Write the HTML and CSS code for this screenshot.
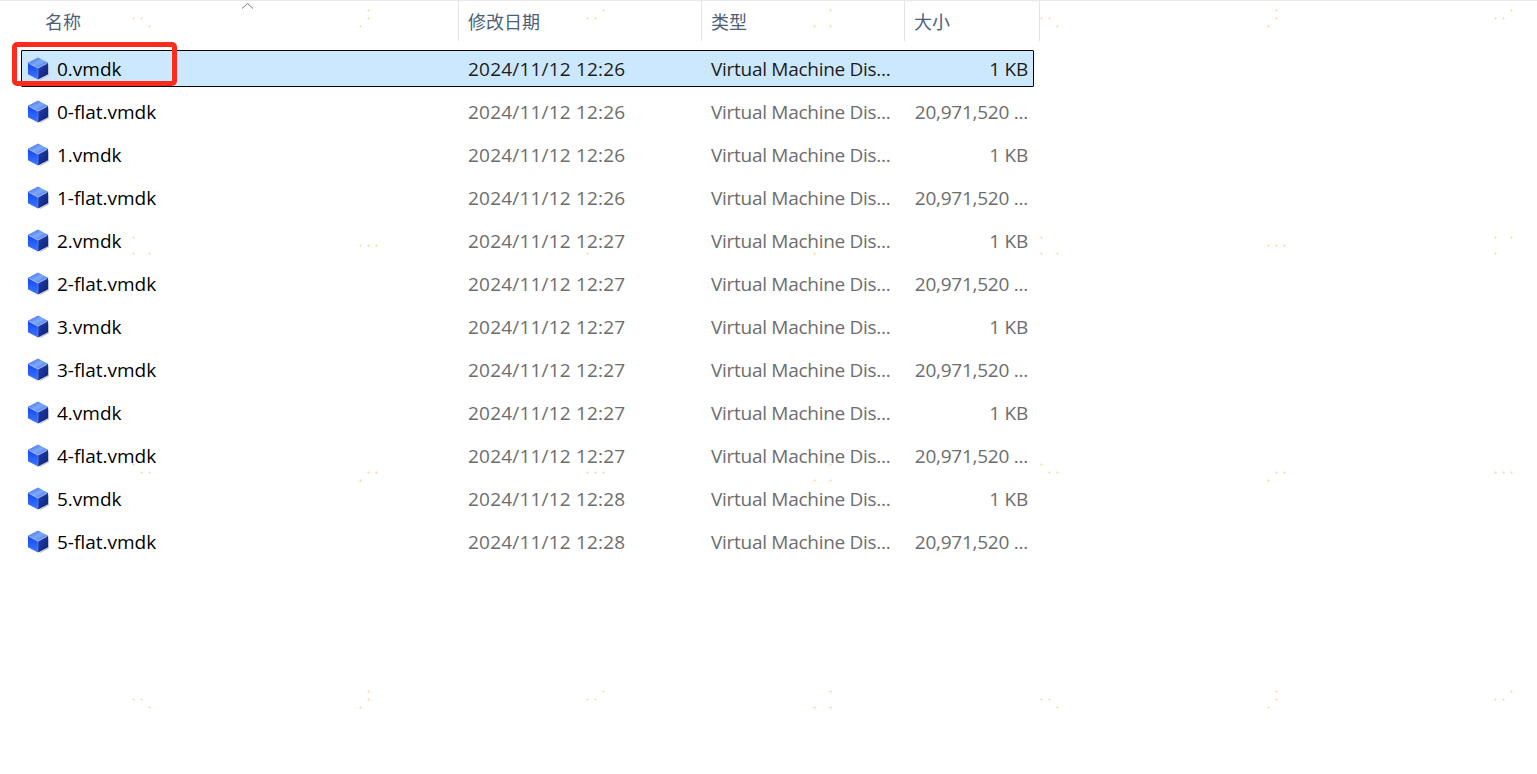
FILE: index.html
```html
<!DOCTYPE html>
<html lang="zh-CN">
<head>
<meta charset="utf-8">
<title>vmdk</title>
<link rel="stylesheet" href="styles.css">
</head>
<body>
<svg class="defs" width="0" height="0" aria-hidden="true">
  <defs>
    <linearGradient id="gTop" x1="0" y1="0" x2="1" y2="1"><stop offset="0" stop-color="#2f62e8"/><stop offset=".5" stop-color="#7ea8fa"/><stop offset="1" stop-color="#3f74ee"/></linearGradient>
    <linearGradient id="gLeft" x1="0" y1="0" x2="0" y2="1"><stop offset="0" stop-color="#1146f5"/><stop offset="1" stop-color="#3f78fa"/></linearGradient>
    <linearGradient id="gRight" x1="0" y1="0" x2="1" y2="1"><stop offset="0" stop-color="#1f3fb8"/><stop offset="1" stop-color="#0f2170"/></linearGradient>
    <symbol id="cube" viewBox="0 0 24 24">
      <path d="M22 8v10l-9 5 1 1 9-5V9z" fill="#c4c7d0"/>
      <path d="M11.5 .5 22 6 11.5 11.5 1 6z" fill="url(#gTop)"/>
      <path d="M1 6 11.5 11.5v12L1 18z" fill="url(#gLeft)"/>
      <path d="M22 6 11.5 11.5v12L22 18z" fill="url(#gRight)"/>
      <path d="M2 6.7 11.5 11.7 21 6.7" fill="none" stroke="#bcd3ff" stroke-width=".7"/>
      <path d="M11.5 11.7V22.5" fill="none" stroke="#6f97f2" stroke-width=".6"/>
    </symbol>
    <path id="w1" d="M-1 8.5h3M.5 7v3M7 8.5h3M8.5 7v3M15 16.5h3M16.5 15v3"/>
    <path id="w2" d="M7 .5h3M8.5-1v3M7 8.5h3M8.5 7v3M-1 16.5h3M.5 15v3"/>
    <path id="w3" d="M-1 8.5h3M.5 7v3M7 8.5h3M8.5 7v3M15 .5h3M16.5-1v3"/>
    <path id="w4" d="M-1 16.5h3M.5 15v3M15 .5h3M16.5-1v3M15 16.5h3M16.5 15v3"/>
    <path id="w5" d="M-1 .5h3M.5-1v3M-1 16.5h3M.5 15v3M15 16.5h3M16.5 15v3"/>
    <path id="w6" d="M-1 8.5h3M.5 7v3M7 8.5h3M8.5 7v3M15 8.5h3M16.5 7v3"/>
    <path id="w7" d="M-1 .5h3M.5-1v3M15 .5h3M16.5-1v3M-1 16.5h3M.5 15v3"/>
    <path id="w8" d="M-1 .5h3M.5-1v3M7 8.5h3M8.5 7v3M15 8.5h3M16.5 7v3"/>
    <path id="w9" d="M-1 16.5h3M.5 15v3M7 8.5h3M8.5 7v3M15 8.5h3M16.5 7v3"/>
  </defs>
</svg>

<main class="explorer">
  <header class="head">
    <div class="head-cell head-name">名称</div>
    <div class="head-cell">修改日期</div>
    <div class="head-cell head-type">类型</div>
    <div class="head-cell">大小</div>
  </header>
  <svg class="sort" width="13" height="8" viewBox="0 0 13 8" aria-hidden="true"><path d="M1 6.5 6.5 1.5 12 6.5" fill="none" stroke="#777"/></svg>

  <div class="list">
    <div class="row selected"><div class="name"><svg class="icon"><use href="#cube"/></svg>0.vmdk</div><div class="date">2024/11/12 12:26</div><div class="type">Virtual Machine Dis...</div><div class="size">1 KB</div></div>
    <div class="row"><div class="name"><svg class="icon"><use href="#cube"/></svg>0-flat.vmdk</div><div class="date">2024/11/12 12:26</div><div class="type">Virtual Machine Dis...</div><div class="size">20,971,520 ...</div></div>
    <div class="row"><div class="name"><svg class="icon"><use href="#cube"/></svg>1.vmdk</div><div class="date">2024/11/12 12:26</div><div class="type">Virtual Machine Dis...</div><div class="size">1 KB</div></div>
    <div class="row"><div class="name"><svg class="icon"><use href="#cube"/></svg>1-flat.vmdk</div><div class="date">2024/11/12 12:26</div><div class="type">Virtual Machine Dis...</div><div class="size">20,971,520 ...</div></div>
    <div class="row"><div class="name"><svg class="icon"><use href="#cube"/></svg>2.vmdk</div><div class="date">2024/11/12 12:27</div><div class="type">Virtual Machine Dis...</div><div class="size">1 KB</div></div>
    <div class="row"><div class="name"><svg class="icon"><use href="#cube"/></svg>2-flat.vmdk</div><div class="date">2024/11/12 12:27</div><div class="type">Virtual Machine Dis...</div><div class="size">20,971,520 ...</div></div>
    <div class="row"><div class="name"><svg class="icon"><use href="#cube"/></svg>3.vmdk</div><div class="date">2024/11/12 12:27</div><div class="type">Virtual Machine Dis...</div><div class="size">1 KB</div></div>
    <div class="row"><div class="name"><svg class="icon"><use href="#cube"/></svg>3-flat.vmdk</div><div class="date">2024/11/12 12:27</div><div class="type">Virtual Machine Dis...</div><div class="size">20,971,520 ...</div></div>
    <div class="row"><div class="name"><svg class="icon"><use href="#cube"/></svg>4.vmdk</div><div class="date">2024/11/12 12:27</div><div class="type">Virtual Machine Dis...</div><div class="size">1 KB</div></div>
    <div class="row"><div class="name"><svg class="icon"><use href="#cube"/></svg>4-flat.vmdk</div><div class="date">2024/11/12 12:27</div><div class="type">Virtual Machine Dis...</div><div class="size">20,971,520 ...</div></div>
    <div class="row"><div class="name"><svg class="icon"><use href="#cube"/></svg>5.vmdk</div><div class="date">2024/11/12 12:28</div><div class="type">Virtual Machine Dis...</div><div class="size">1 KB</div></div>
    <div class="row"><div class="name"><svg class="icon"><use href="#cube"/></svg>5-flat.vmdk</div><div class="date">2024/11/12 12:28</div><div class="type">Virtual Machine Dis...</div><div class="size">20,971,520 ...</div></div>
  </div>

  <div class="annotation"></div>

  <svg class="watermark" width="1537" height="774" aria-hidden="true">
    <use href="#w1" x="133" y="10"/><use href="#w2" x="360" y="10"/><use href="#w3" x="587" y="10"/><use href="#w4" x="814" y="10"/><use href="#w1" x="1041" y="10"/><use href="#w2" x="1268" y="10"/><use href="#w3" x="1495" y="10"/>
    <use href="#w5" x="133" y="237"/><use href="#w6" x="360" y="237"/><use href="#w7" x="587" y="237"/><use href="#w9" x="814" y="237"/><use href="#w5" x="1041" y="237"/><use href="#w6" x="1268" y="237"/><use href="#w7" x="1495" y="237"/>
    <use href="#w8" x="133" y="464"/><use href="#w9" x="360" y="464"/><use href="#w6" x="587" y="464"/><use href="#w4" x="814" y="464"/><use href="#w8" x="1041" y="464"/><use href="#w9" x="1268" y="464"/><use href="#w6" x="1495" y="464"/>
    <use href="#w1" x="133" y="691"/><use href="#w2" x="360" y="691"/><use href="#w3" x="587" y="691"/><use href="#w4" x="814" y="691"/><use href="#w1" x="1041" y="691"/><use href="#w2" x="1268" y="691"/><use href="#w3" x="1495" y="691"/>
  </svg>
</main>
</body>
</html>
```
FILE: styles.css
```css
* { box-sizing: border-box; }

html, body {
  margin: 0;
  height: 100%;
  background: #fff;
  overflow: hidden;
}

.defs { position: absolute; }

.explorer {
  position: relative;
  width: 1537px;
  height: 774px;
  font-family: "Open Sans", "Noto Sans CJK SC", sans-serif;
  font-size: 19px;
  border-top: 1px solid #e8e8e8;
}

.head {
  display: grid;
  grid-template-columns: 459px 243px 203px 135px;
  width: 1040px;
  height: 40px;
}

.head-cell {
  display: flex;
  align-items: center;
  padding-left: 9px;
  border-right: 1px solid #e5e5e5;
  color: #4c607a;
  font-family: "Noto Sans CJK SC", sans-serif;
  font-size: 18px;
  line-height: 1;
}

.head-name { padding-left: 45px; }
.head-type { padding-left: 9px; }

.sort {
  position: absolute;
  left: 241px;
  top: 1px;
}

.list {
  display: flex;
  flex-direction: column;
  gap: 6px;
  margin: 9px 0 0 21px;
  width: 1013px;
}

.row {
  display: grid;
  grid-template-columns: 436px 243px 203px 129px;
  align-items: center;
  height: 37px;
  border: 1px solid transparent;
  border-radius: 1px;
  color: #6d6d6d;
  line-height: 1;
  white-space: nowrap;
}

.row.selected {
  background: #cce8ff;
  border-color: #000;
  color: #1c1c1c;
}

.name {
  display: flex;
  align-items: center;
  gap: 7px;
  padding: 2px 0 0 5px;
  color: #000;
}

.icon {
  width: 23px;
  height: 23px;
  margin-top: -2px;
  flex: none;
}

.date, .type { padding: 2px 0 0 10px; }
.date { letter-spacing: 0.2px; }
.type { letter-spacing: -0.28px; }

.size {
  padding: 2px 5px 0 0;
  text-align: right;
  letter-spacing: -0.25px;
}

.annotation {
  position: absolute;
  left: 12px;
  top: 41px;
  width: 165px;
  height: 44px;
  border: 5px solid #fb2b1d;
  border-radius: 5px;
  pointer-events: none;
}

.watermark {
  position: absolute;
  left: 0;
  top: -1px;
  pointer-events: none;
  fill: none;
  stroke: #ffd29a;
  stroke-width: 1;
  stroke-opacity: .55;
}
```
